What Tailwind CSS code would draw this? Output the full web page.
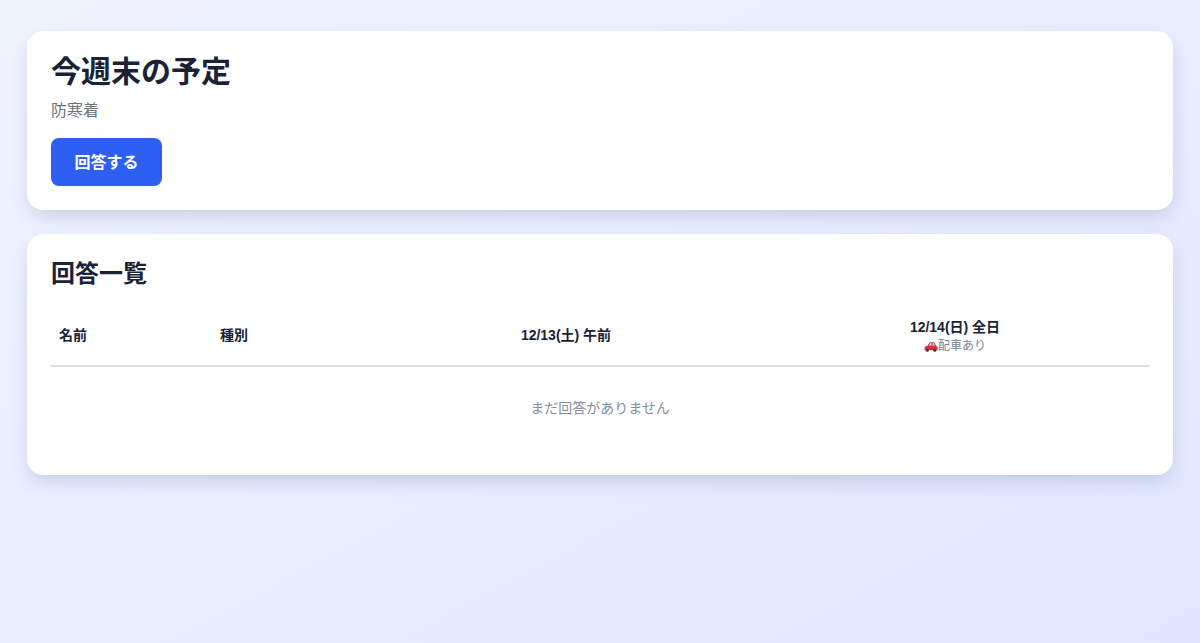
<!DOCTYPE html>
<html lang="ja">
<head>
    <meta charset="UTF-8">
    <meta name="viewport" content="width=device-width, initial-scale=1.0">
    <title>今週末の予定</title>
    <script src="https://cdn.jsdelivr.net/npm/@tailwindcss/browser@4"></script>
</head>
<body class="min-h-screen bg-gradient-to-br from-[#f0f4ff] to-[#e0e7ff] font-['Liberation_Sans','Noto_Sans_CJK_JP',sans-serif] text-[#1a2235]">
    <div class="flex flex-col gap-6 px-[27px] pt-[31px]">

        <div class="rounded-2xl bg-white p-6 shadow-[0_8px_20px_-4px_rgba(30,45,90,0.2)]">
            <h1 class="text-[30px] leading-[34px] font-semibold">今週末の予定</h1>
            <p class="mt-[10px] text-base leading-6 text-[#6b7280]">防寒着</p>
            <button class="mt-[15px] h-12 w-[111px] rounded-lg bg-[#2d5ff5] pt-px text-base font-semibold text-white">回答する</button>
        </div>

        <div class="rounded-2xl bg-white p-6 shadow-[0_8px_20px_-4px_rgba(30,45,90,0.2)]">
            <h2 class="text-2xl leading-8 font-semibold">回答一覧</h2>
            <table class="mt-[15px] w-full table-fixed border-separate border-spacing-0 text-sm">
                <thead>
                    <tr class="h-[62px]">
                        <th class="w-[161px] border-b-2 border-[#d8dbe4] px-2 text-left font-bold">名前</th>
                        <th class="w-[159px] border-b-2 border-[#d8dbe4] px-2 text-left font-bold">種別</th>
                        <th class="w-[390px] border-b-2 border-[#d8dbe4] px-2 text-center font-bold">12/13(土) 午前</th>
                        <th class="border-b-2 border-[#d8dbe4] px-2 text-center font-bold">
                            12/14(日) 全日
                            <div class="mt-px flex items-center justify-center text-xs leading-4 font-normal text-[#7a8494]">
                                <svg class="h-[14px] w-[14px]" viewBox="0 0 14 14" aria-hidden="true">
                                    <path d="M.6 11.2V8.8c0-1 1-1.6 3-2l2-3.6h4.4l2.4 3.8c.8.5 1.2 1 1.2 2v2.2z" fill="#dc3034"/>
                                    <path d="M6.2 4h1.6v2.7H4.8zM8.6 4h1l1.5 2.7H8.6z" fill="#a8cde8"/>
                                    <circle cx="3.4" cy="11.2" r="1.5" fill="#34363c"/>
                                    <circle cx="10.8" cy="11.2" r="1.5" fill="#34363c"/>
                                </svg>
                                <span>配車あり</span>
                            </div>
                        </th>
                    </tr>
                </thead>
                <tbody>
                    <tr>
                        <td colspan="4" class="pt-[31px] pb-[33px] text-center text-sm leading-5 text-[#868e9c]">まだ回答がありません</td>
                    </tr>
                </tbody>
            </table>
        </div>

    </div>
</body>
</html>
